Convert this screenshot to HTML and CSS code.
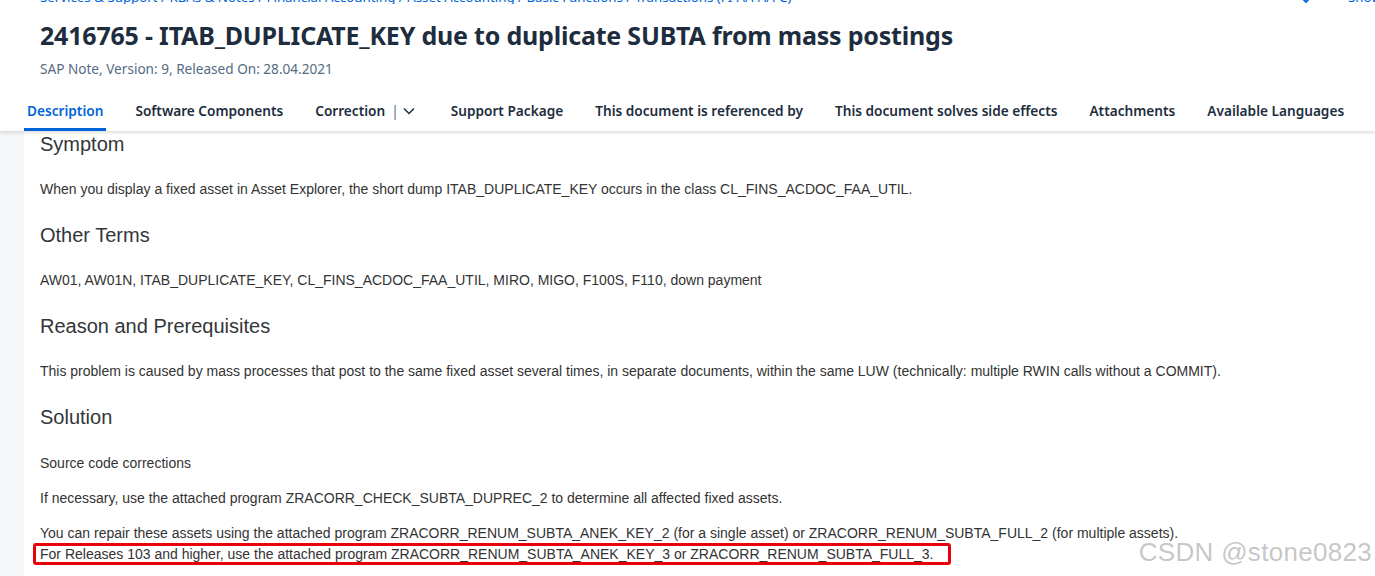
FILE: index.html
```html
<!DOCTYPE html>
<html lang="en">
<head>
    <meta charset="UTF-8">
    <title>2416765 - ITAB_DUPLICATE_KEY due to duplicate SUBTA from mass postings</title>
    <link rel="stylesheet" href="styles.css">
</head>
<body>

<header class="note-header">
    <div class="crumbs">
        <div class="crumb-path">
            <a href="#">Services &amp; Support</a> /
            <a href="#">KBAs &amp; Notes</a> /
            <a href="#">Financial Accounting</a> /
            <a href="#">Asset Accounting</a> /
            <a href="#">Basic Functions</a> /
            <a href="#">Transactions (FI-AA-AA-C)</a>
        </div>
        <div class="crumb-tools">
            <svg class="chev-blue" width="14" height="10" viewBox="0 0 14 10"><path d="M2 2 L7 7 L12 2" fill="none" stroke="#0064d9" stroke-width="1.8"/></svg>
            <a href="#" class="show-link">Show more</a>
        </div>
    </div>
    <h1 class="note-title">2416765 - ITAB_DUPLICATE_KEY due to duplicate SUBTA from mass postings</h1>
    <div class="note-meta">SAP Note, Version: 9, Released On: 28.04.2021</div>
</header>

<nav class="tabs">
    <a href="#" class="tab active">Description</a>
    <a href="#" class="tab">Software Components</a>
    <a href="#" class="tab tab-menu">Correction <span class="sep">|</span>
        <svg width="12" height="8" viewBox="0 0 12 8"><path d="M1 1.5 L6 6.5 L11 1.5" fill="none" stroke="#1d2d3e" stroke-width="1.5"/></svg>
    </a>
    <a href="#" class="tab">Support Package</a>
    <a href="#" class="tab">This document is referenced by</a>
    <a href="#" class="tab">This document solves side effects</a>
    <a href="#" class="tab">Attachments</a>
    <a href="#" class="tab">Available Languages</a>
</nav>

<main class="page">
    <div class="content">
        <section>
            <h2>Symptom</h2>
            <p>When you display a fixed asset in Asset Explorer, the short dump ITAB_DUPLICATE_KEY occurs in the class CL_FINS_ACDOC_FAA_UTIL.</p>
        </section>
        <section>
            <h2>Other Terms</h2>
            <p>AW01, AW01N, ITAB_DUPLICATE_KEY, CL_FINS_ACDOC_FAA_UTIL, MIRO, MIGO, F100S, F110, down payment</p>
        </section>
        <section>
            <h2>Reason and Prerequisites</h2>
            <p>This problem is caused by mass processes that post to the same fixed asset several times, in separate documents, within the same LUW (technically: multiple RWIN calls without a COMMIT).</p>
        </section>
        <section>
            <h2>Solution</h2>
            <p>Source code corrections</p>
            <p>If necessary, use the attached program ZRACORR_CHECK_SUBTA_DUPREC_2 to determine all affected fixed assets.</p>
            <p>You can repair these assets using the attached program ZRACORR_RENUM_SUBTA_ANEK_KEY_2 (for a single asset) or ZRACORR_RENUM_SUBTA_FULL_2 (for multiple assets).<br>
            <span class="marked">For Releases 103 and higher, use the attached program ZRACORR_RENUM_SUBTA_ANEK_KEY_3 or ZRACORR_RENUM_SUBTA_FULL_3.</span></p>
        </section>
    </div>
</main>

<div class="watermark">CSDN @stone0823</div>

</body>
</html>
```

FILE: styles.css
```css
body {
    margin: 0;
    background: #fff;
    font-family: "Liberation Sans", Arial, sans-serif;
    color: #1d2d3e;
    overflow: hidden;
}
a {
    text-decoration: none;
}
.note-header {
    padding: 0 0 0 40px;
}
.crumbs {
    display: flex;
    justify-content: space-between;
    align-items: center;
    height: 14px;
    margin-top: -10px;
    font-family: "Noto Sans", sans-serif;
    font-size: 13.3px;
    color: #0064d9;
    overflow: hidden;
}
.crumbs a {
    color: #0064d9;
}
.crumb-tools {
    display: flex;
    align-items: center;
    gap: 35px;
    white-space: nowrap;
    width: 76px;
    overflow: hidden;
}
.chev-blue {
    flex: none;
    margin-top: 6px;
}
.note-title {
    margin: 16px 0 0;
    font-family: "Noto Sans", sans-serif;
    font-size: 25px;
    font-weight: 700;
    line-height: 30px;
    letter-spacing: -0.2px;
    color: #1d2d3e;
}
.note-meta {
    margin-top: 11px;
    font-family: "Noto Sans", sans-serif;
    font-size: 13.6px;
    line-height: 16px;
    color: #556b82;
}
.tabs {
    display: flex;
    align-items: stretch;
    gap: 26px;
    height: 38px;
    margin-top: 16px;
    padding-left: 24px;
    box-shadow: 0 2px 3px rgba(0, 0, 0, 0.12);
    position: relative;
    z-index: 1;
    background: #fff;
}
.tab {
    display: flex;
    align-items: center;
    gap: 8px;
    padding: 0 3px;
    font-family: "Noto Sans", sans-serif;
    font-size: 13.65px;
    font-weight: 600;
    color: #1d2d3e;
    border-bottom: 3px solid transparent;
    white-space: nowrap;
}
.tab.active {
    color: #0064d9;
    border-bottom-color: #0064d9;
}
.tab-menu {
    gap: 4px;
    padding-right: 7px;
}
.sep {
    font-weight: 400;
    color: #556b82;
    margin-left: 2px;
}
.page {
    display: flex;
    background: #f5f6f7;
    padding-left: 24px;
    min-height: 460px;
}
.content {
    flex: 1;
    background: #fff;
    padding: 1px 16px 0;
    color: #333;
}
h2 {
    margin: 0 0 23px;
    font-size: 20px;
    font-weight: 400;
    line-height: 24px;
    color: #32363a;
}
p {
    margin: 0 0 13px;
    font-size: 14px;
    line-height: 21px;
}
section + section {
    margin-top: 23px;
}
section:last-child h2 {
    margin-bottom: 24px;
}
section:last-child p {
    margin-bottom: 14px;
}
.marked {
    position: relative;
}
.marked::after {
    content: "";
    position: absolute;
    left: -7px;
    right: -17px;
    top: -3px;
    bottom: -3px;
    border: 3px solid #e8000b;
    border-radius: 3px;
}
.watermark {
    position: absolute;
    right: 3px;
    top: 537px;
    font-size: 26px;
    color: rgba(150, 150, 150, 0.55);
    letter-spacing: 0.3px;
}
```
